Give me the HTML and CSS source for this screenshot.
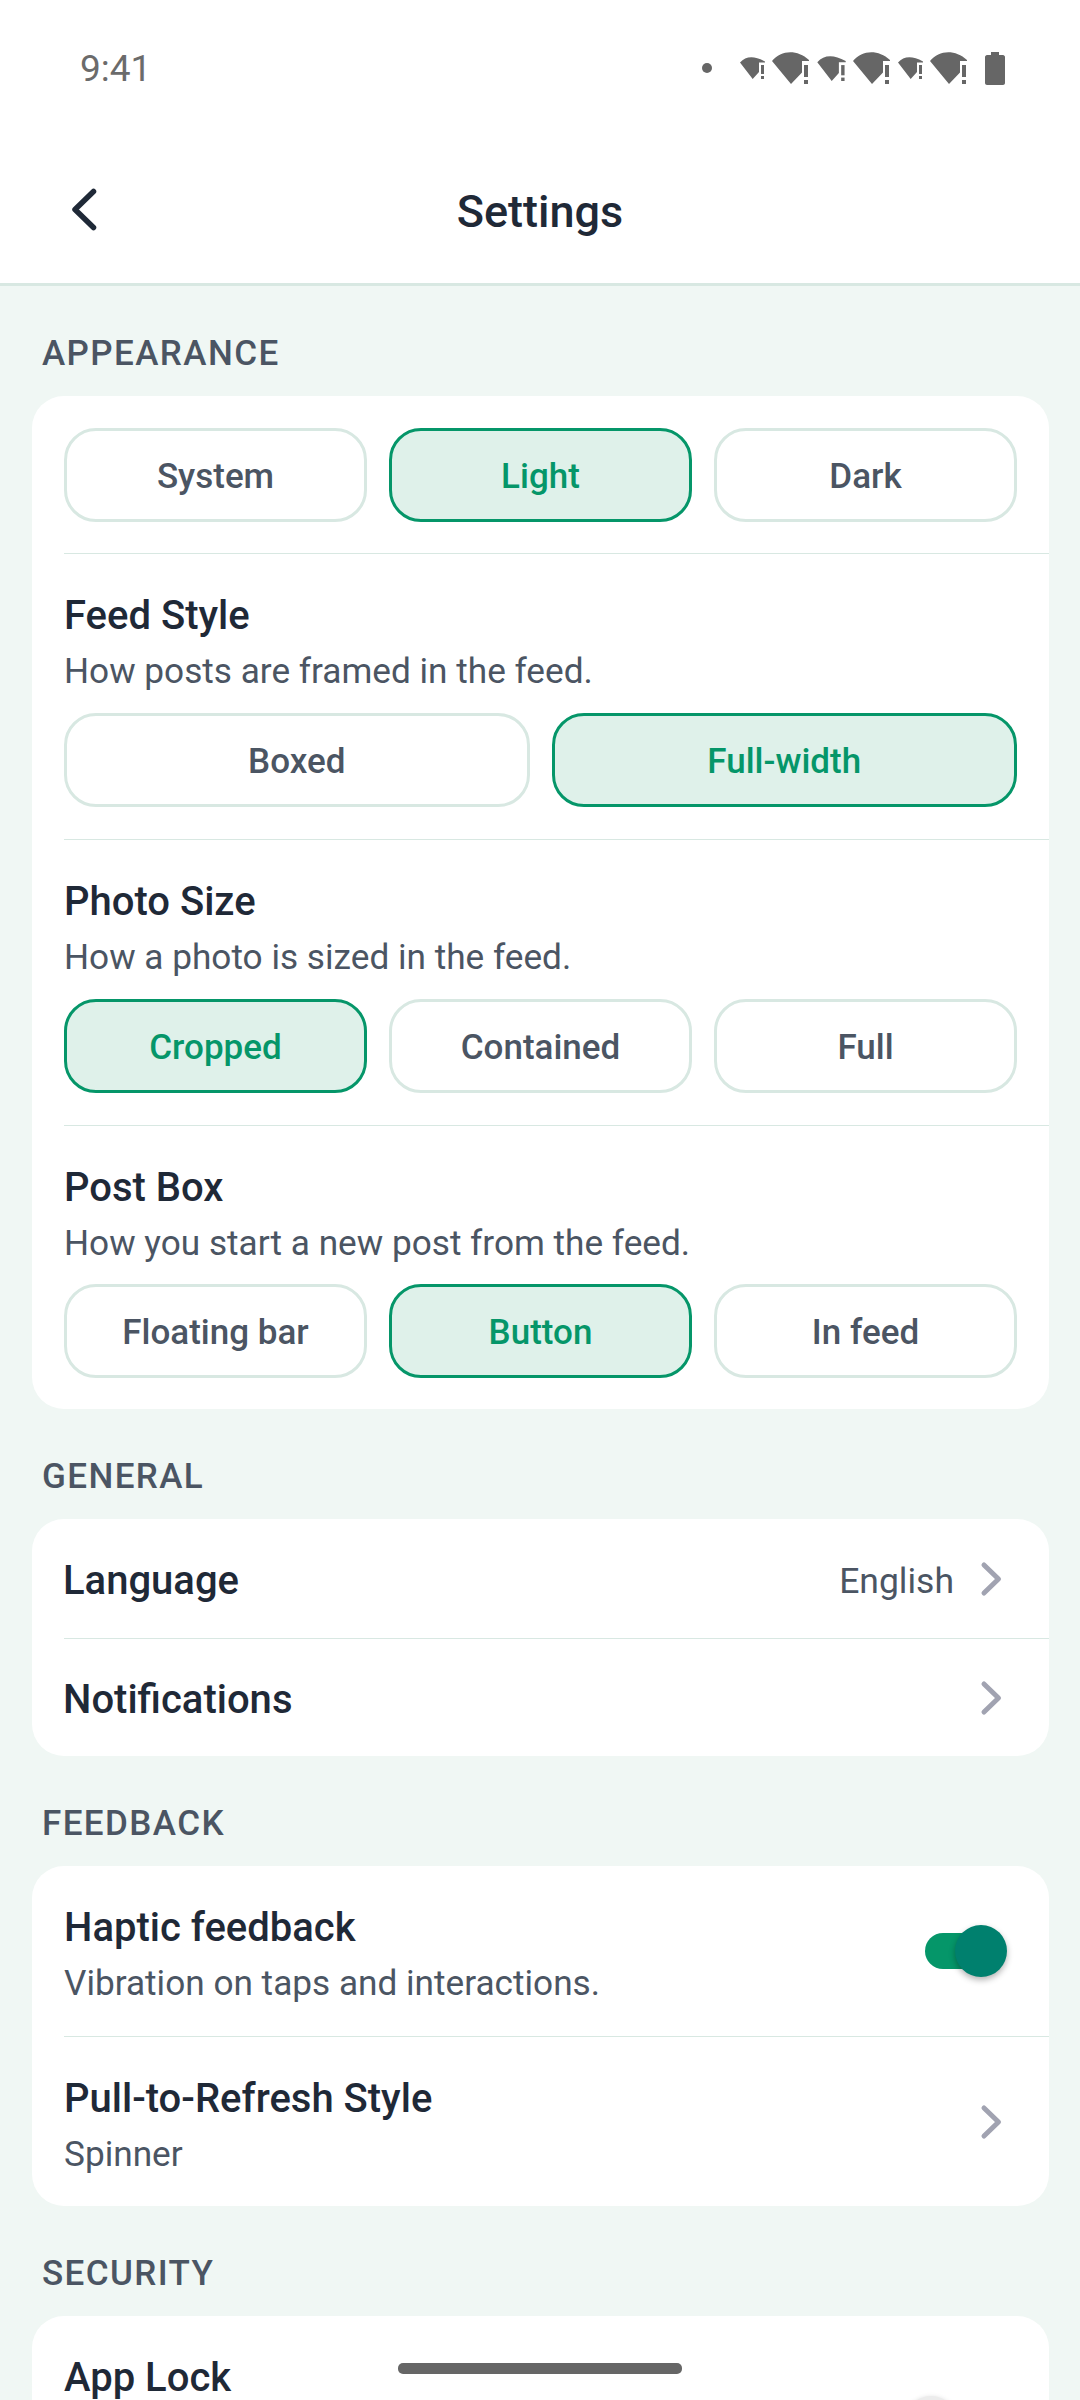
FILE: index.html
```html
<!DOCTYPE html>
<html>

<head>
  <title>Settings</title>
  <link rel="stylesheet" href="styles.css">
</head>

<body>

  <div class="status-bar">
    <span class="clock">9:41</span>
    <div class="status-icons">
      <span class="dot"></span>
      <svg class="wifi small" viewBox="0 0 25 22"><path d="M0 5.500C6 -1 14 -1.500 25 4.500V5.500H19V15L12.700 22Z" /><rect x="21" y="8" width="3" height="9" /><rect x="21" y="19" width="3" height="3" /></svg>
      <svg class="wifi big" viewBox="0 0 38 32"><path d="M0 9C9 -2 25 -3 37 8V9H30V20.500L19 32Z" /><rect x="32" y="13" width="4" height="12" /><rect x="32" y="28" width="4" height="4" /></svg>
      <svg class="wifi mid" viewBox="0 0 25 22"><path d="M0 5.500C6 -1 14 -1.500 25 4.500V5.500H19V15L12.700 22Z" /><rect x="21" y="8" width="3" height="9" /><rect x="21" y="19" width="3" height="3" /></svg>
      <svg class="wifi big" viewBox="0 0 38 32"><path d="M0 9C9 -2 25 -3 37 8V9H30V20.500L19 32Z" /><rect x="32" y="13" width="4" height="12" /><rect x="32" y="28" width="4" height="4" /></svg>
      <svg class="wifi small" viewBox="0 0 25 22"><path d="M0 5.500C6 -1 14 -1.500 25 4.500V5.500H19V15L12.700 22Z" /><rect x="21" y="8" width="3" height="9" /><rect x="21" y="19" width="3" height="3" /></svg>
      <svg class="wifi big" viewBox="0 0 38 32"><path d="M0 9C9 -2 25 -3 37 8V9H30V20.500L19 32Z" /><rect x="32" y="13" width="4" height="12" /><rect x="32" y="28" width="4" height="4" /></svg>
      <svg class="battery" viewBox="0 0 20 33"><path d="M6 0H14V3H18C19 3 20 4 20 5V31C20 32 19 33 18 33H2C1 33 0 32 0 31V5C0 4 1 3 2 3H6Z" /></svg>
    </div>
  </div>

  <header class="top-bar">
    <svg class="back-icon" viewBox="0 0 28 44"><path d="M23.500 3.500L5 21.500L23.500 39.500" /></svg>
    <h1>Settings</h1>
  </header>

  <main>
    <h2 class="section-title">APPEARANCE</h2>
    <section class="card">
      <div class="option-block first">
        <div class="options">
          <div class="option">System</div>
          <div class="option active">Light</div>
          <div class="option">Dark</div>
        </div>
      </div>
      <div class="option-block">
        <div class="label">Feed Style</div>
        <div class="hint">How posts are framed in the feed.</div>
        <div class="options">
          <div class="option">Boxed</div>
          <div class="option active">Full-width</div>
        </div>
      </div>
      <div class="option-block">
        <div class="label">Photo Size</div>
        <div class="hint">How a photo is sized in the feed.</div>
        <div class="options">
          <div class="option active">Cropped</div>
          <div class="option">Contained</div>
          <div class="option">Full</div>
        </div>
      </div>
      <div class="option-block last">
        <div class="label">Post Box</div>
        <div class="hint">How you start a new post from the feed.</div>
        <div class="options">
          <div class="option">Floating bar</div>
          <div class="option active">Button</div>
          <div class="option">In feed</div>
        </div>
      </div>
    </section>

    <h2 class="section-title">GENERAL</h2>
    <section class="card">
      <div class="row plain">
        <div class="row-text"><div class="label">Language</div></div>
        <span class="value">English</span>
        <svg class="chevron" viewBox="0 0 24 38"><path d="M5 5L19.500 19L5 33" /></svg>
      </div>
      <div class="row plain">
        <div class="row-text"><div class="label">Notifications</div></div>
        <svg class="chevron" viewBox="0 0 24 38"><path d="M5 5L19.500 19L5 33" /></svg>
      </div>
    </section>

    <h2 class="section-title">FEEDBACK</h2>
    <section class="card">
      <div class="row tall">
        <div class="row-text">
          <div class="label">Haptic feedback</div>
          <div class="hint">Vibration on taps and interactions.</div>
        </div>
        <div class="toggle on"><span class="knob"></span></div>
      </div>
      <div class="row tall">
        <div class="row-text">
          <div class="label">Pull-to-Refresh Style</div>
          <div class="hint">Spinner</div>
        </div>
        <svg class="chevron" viewBox="0 0 24 38"><path d="M5 5L19.500 19L5 33" /></svg>
      </div>
    </section>

    <h2 class="section-title">SECURITY</h2>
    <section class="card">
      <div class="row lock">
        <div class="row-text">
          <div class="label">App Lock</div>
        </div>
        <div class="toggle"><span class="knob"></span></div>
      </div>
    </section>
  </main>

  <div class="home-bar"></div>

</body>

</html>
```

FILE: styles.css
```css
* {
  box-sizing: border-box;
}

html,
body {
  height: 2400px;
  overflow: hidden;
}

body {
  margin: 0;
  position: relative;
  font-family: Roboto, sans-serif;
  background: #f0f7f4;
  color: #1f2937;
}

.status-bar {
  height: 135px;
  background: #fff;
  display: flex;
  align-items: flex-start;
  justify-content: space-between;
  padding: 48px 75px 0 80px;
}

.clock {
  font-size: 37px;
  line-height: 40px;
  margin-top: 1px;
  color: #6b6b6b;
}

.status-icons {
  display: flex;
  align-items: center;
  gap: 7px;
  height: 40px;
  fill: #666;
}

.dot {
  width: 10px;
  height: 10px;
  border-radius: 50%;
  background: #666;
  margin-right: 21px;
}

.wifi {
  display: block;
}

.wifi.small {
  width: 25px;
  height: 22px;
}

.wifi.mid {
  width: 29px;
  height: 25px;
}

.wifi.big {
  width: 38px;
  height: 32px;
}

.battery {
  width: 20px;
  height: 33px;
  margin-left: 10px;
}

.top-bar {
  height: 151px;
  background: #fff;
  border-bottom: 3px solid #d8e8e2;
  position: relative;
  display: flex;
  align-items: center;
  justify-content: center;
  padding-top: 5px;
}

.top-bar h1 {
  margin: 0;
  font-size: 45px;
  font-weight: 500;
  color: #1f2937;
}

.back-icon {
  position: absolute;
  left: 70px;
  top: 53px;
  width: 28px;
  height: 44px;
  fill: none;
  stroke: #1f2937;
  stroke-width: 5.5;
  stroke-linecap: round;
  stroke-linejoin: round;
}

main {
  height: 2114px;
  overflow: hidden;
  padding: 0 31px 0 32px;
}

.section-title {
  margin: 0;
  padding: 48px 10px 22px;
  font-size: 35px;
  line-height: 40px;
  font-weight: 500;
  letter-spacing: 1.4px;
  color: #4b5563;
}

.card {
  background: #fff;
  border-radius: 32px;
}

.option-block {
  margin-left: 32px;
  padding: 39px 32px 32px 0;
  border-top: 1px solid #d8e8e2;
}

.option-block.first {
  border-top: none;
  padding-top: 32px;
  padding-bottom: 31px;
}

.option-block.last {
  padding-bottom: 31px;
}

.label {
  font-size: 40px;
  line-height: 46px;
  font-weight: 500;
  color: #1f2937;
}

.hint {
  font-size: 35.2px;
  line-height: 42px;
  color: #4b5563;
  margin-top: 11px;
}

.options {
  display: flex;
  gap: 22px;
  margin-top: 21px;
}

.first .options {
  margin-top: 0;
}

.last .options {
  margin-top: 20px;
}

.option {
  flex: 1;
  height: 94px;
  border: 3px solid #d8e8e2;
  border-radius: 32px;
  padding-top: 2px;
  display: flex;
  align-items: center;
  justify-content: center;
  font-size: 35px;
  font-weight: 500;
  color: #4b5563;
}

.option.active {
  background: #dff1ea;
  border-color: #059669;
  color: #059669;
}

.row {
  display: flex;
  align-items: center;
  margin-left: 32px;
  padding-right: 46px;
  border-top: 1px solid #d8e8e2;
}

.row:first-child {
  border-top: none;
}

.row.plain {
  height: 118.5px;
  padding-top: 2px;
}

.row.plain .row-text {
  margin-left: -1px;
  padding-top: 4px;
}

.row.tall {
  height: 170px;
}

.row.tall .row-text {
  padding-top: 7px;
}

.row.lock {
  height: 212px;
  align-items: flex-start;
  padding-top: 39px;
}

.row-text {
  flex: 1;
}

.value {
  font-size: 35.500px;
  color: #4b5563;
  margin-right: 25px;
  padding-top: 4px;
}

.chevron {
  width: 24px;
  height: 38px;
  fill: none;
  stroke: #a1a3b1;
  stroke-width: 5;
  stroke-linecap: round;
  stroke-linejoin: round;
}

.toggle {
  position: relative;
  width: 62px;
  height: 36px;
  border-radius: 18px;
  background: #059669;
  margin-right: 16px;
}

.toggle .knob {
  position: absolute;
  right: -20px;
  top: -8px;
  width: 52px;
  height: 52px;
  border-radius: 50%;
  background: #00806e;
  box-shadow: 0 3px 6px rgba(0, 0, 0, 0.3);
}

.toggle:not(.on) {
  background: #e5e7eb;
  margin-top: 49px;
}

.toggle:not(.on) .knob {
  background: #ececec;
  left: -20px;
  right: auto;
}

.home-bar {
  position: absolute;
  left: 398px;
  top: 2363px;
  width: 284px;
  height: 11px;
  border-radius: 5px;
  background: #666;
}
```
